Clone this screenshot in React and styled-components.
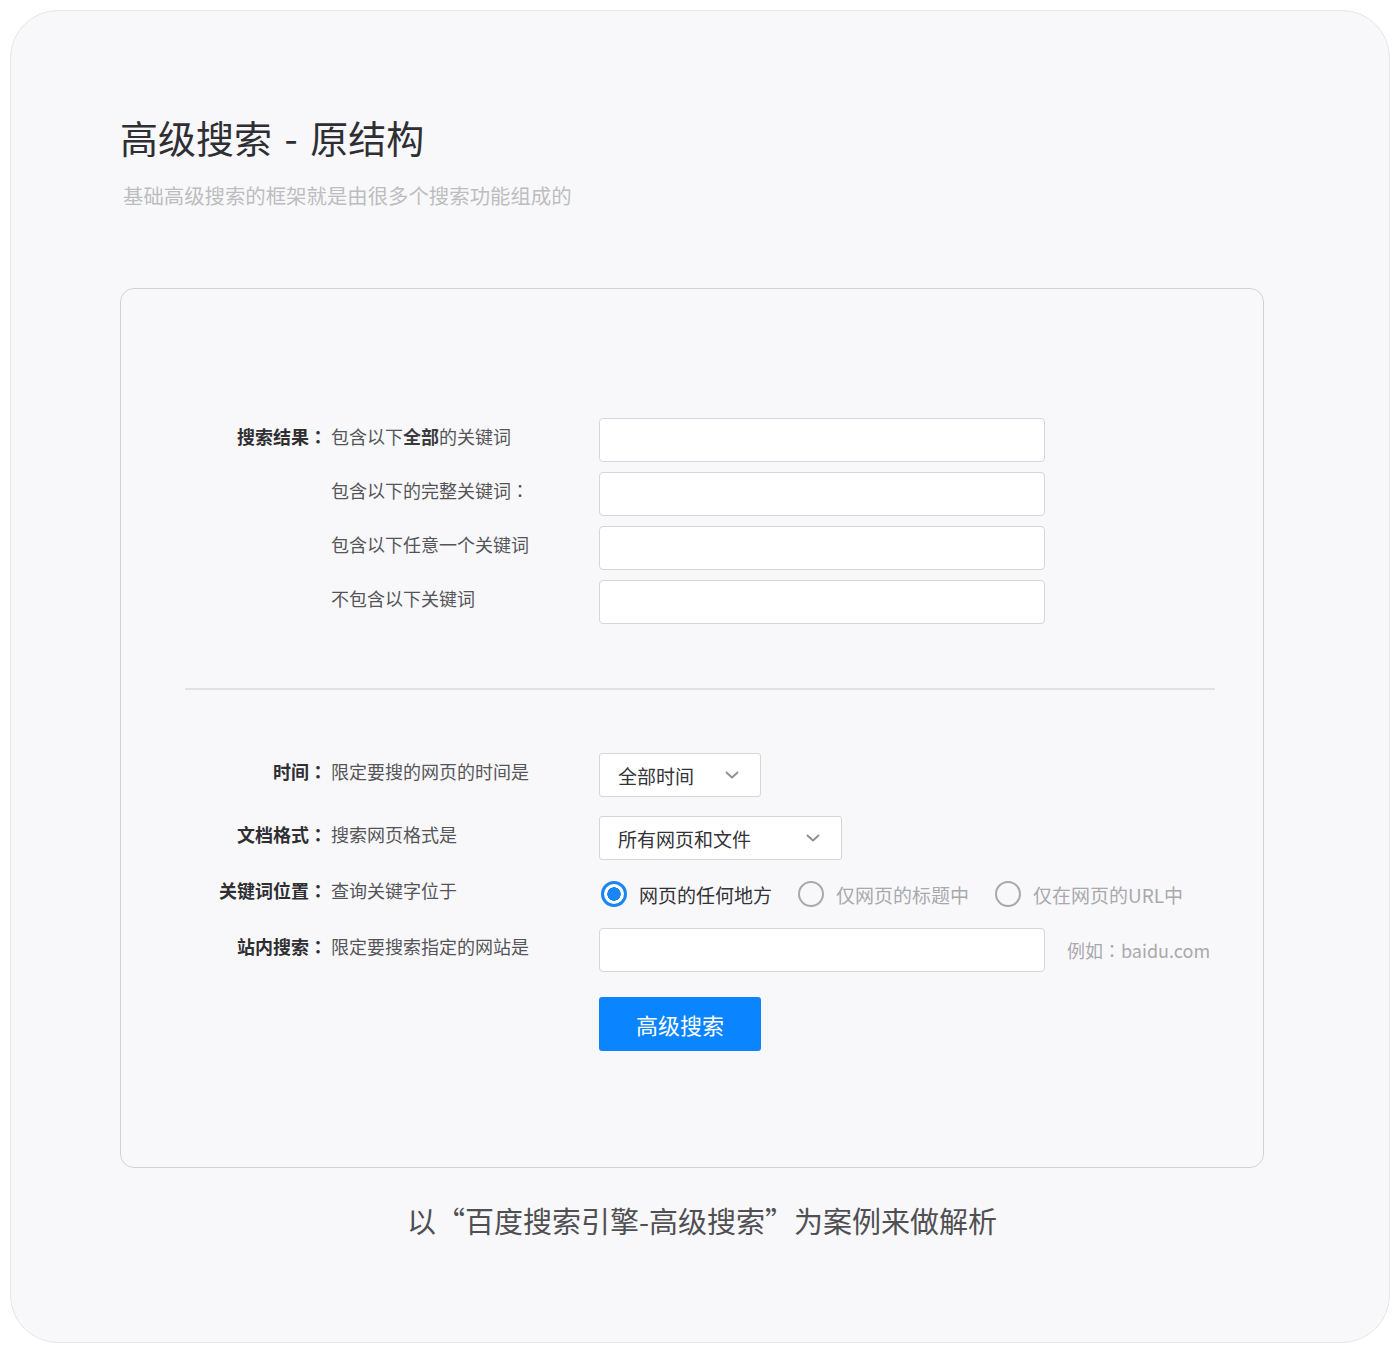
import styled, { createGlobalStyle } from "styled-components";

const GlobalStyle = createGlobalStyle`
    body {
        margin: 0;
        background: #ffffff;
        font-family: "Noto Sans CJK SC", "Noto Sans", sans-serif;
    }
`;

const radios = [
    { text: "网页的任何地方", checked: true },
    { text: "仅网页的标题中" },
    { text: "仅在网页的URL中" },
];

const Chevron = () => (
    <svg width="16" height="16" viewBox="0 0 16 16" fill="none">
        <path d="M2.5 5.5 8 10.5l5.5-5" stroke="#8e8e93" strokeWidth="1.9" strokeLinecap="round" strokeLinejoin="round" />
    </svg>
);

const FieldLabel = ({ children }) => (
    <Label>
        {children && (
            <>
                {children}
                <Colon>：</Colon>
            </>
        )}
    </Label>
);

const App = () => {
    const keywordRows = [
        { label: "搜索结果", text: <>包含以下<b>全部</b>的关键词</> },
        { text: <>包含以下的完整关键词<Colon>：</Colon></> },
        { text: "包含以下任意一个关键词" },
        { text: "不包含以下关键词" },
    ];

    return (
        <>
            <GlobalStyle />
            <Page>
                <Title>高级搜索 - 原结构</Title>
                <Subtitle>基础高级搜索的框架就是由很多个搜索功能组成的</Subtitle>

                <FormBox>
                    <Section>
                        {keywordRows.map((row, i) => (
                            <Row key={i} $gap={i === 0 ? 0 : 10}>
                                <FieldLabel>{row.label}</FieldLabel>
                                <Hint>{row.text}</Hint>
                                <TextInput />
                            </Row>
                        ))}
                    </Section>

                    <Divider />

                    <Section>
                        <Row $gap={0}>
                            <FieldLabel>时间</FieldLabel>
                            <Hint>限定要搜的网页的时间是</Hint>
                            <Select $width={162}>
                                全部时间
                                <Chevron />
                            </Select>
                        </Row>
                        <Row $gap={19}>
                            <FieldLabel>文档格式</FieldLabel>
                            <Hint>搜索网页格式是</Hint>
                            <Select $width={243}>
                                所有网页和文件
                                <Chevron />
                            </Select>
                        </Row>
                        <Row $gap={12}>
                            <FieldLabel>关键词位置</FieldLabel>
                            <Hint>查询关键字位于</Hint>
                            <RadioGroup>
                                {radios.map((r) => (
                                    <RadioItem key={r.text} $checked={r.checked}>
                                        <RadioDot $checked={r.checked} />
                                        {r.text}
                                    </RadioItem>
                                ))}
                            </RadioGroup>
                        </Row>
                        <Row $gap={12}>
                            <FieldLabel>站内搜索</FieldLabel>
                            <Hint>限定要搜索指定的网站是</Hint>
                            <SiteField>
                                <TextInput />
                                <Example>例如<Colon>：</Colon>baidu.com</Example>
                            </SiteField>
                        </Row>
                        <Row $gap={25}>
                            <FieldLabel />
                            <Hint />
                            <SubmitButton>高级搜索</SubmitButton>
                        </Row>
                    </Section>
                </FormBox>

                <Caption>以“百度搜索引擎-高级搜索”为案例来做解析</Caption>
            </Page>
        </>
    );
};

export default App;

const Page = styled.div`
    box-sizing: border-box;
    margin: 10px;
    width: 1380px;
    height: 1333px;
    padding: 102px 125px 0 109px;
    background: #f8f8fa;
    border: 1px solid #e6e6e9;
    border-radius: 48px;
`;

const Title = styled.h1`
    margin: 0;
    font-size: 38px;
    line-height: 48px;
    font-weight: 400;
    word-spacing: 4px;
    color: #2f2f33;
`;

const Subtitle = styled.p`
    margin: 21px 0 0 3px;
    font-size: 20.4px;
    line-height: 26px;
    color: #bdbdc0;
`;

const FormBox = styled.div`
    box-sizing: border-box;
    margin-top: 80px;
    height: 880px;
    padding: 129px 48px 0 0;
    border: 1.5px solid #d2d2d6;
    border-radius: 14px;
`;

const Section = styled.div`
    display: flex;
    flex-direction: column;
`;

const Row = styled.div`
    display: grid;
    grid-template-columns: 210px 268px 1fr;
    align-items: center;
    min-height: 44px;
    margin-top: ${(p) => p.$gap}px;
    font-size: 18px;
`;

/* full-width colon, centred in its em box */
const Colon = styled.span`
    font-family: "Noto Sans CJK JP", "Noto Sans CJK SC", sans-serif;
    font-weight: inherit;
`;

const Label = styled.div`
    padding: 0 4px 8px 0;
    text-align: right;
    font-weight: 700;
    color: #2f2f33;
`;

const Hint = styled.div`
    padding-bottom: 8px;
    color: #555559;

    b {
        font-weight: 700;
        color: #3a3a3e;
    }

    ${Colon} {
        font-weight: 400;
    }
`;

const TextInput = styled.input`
    box-sizing: border-box;
    width: 446px;
    height: 44px;
    margin: 0;
    background: #ffffff;
    border: 1.5px solid #d6d6da;
    border-radius: 4px;
    outline: none;
`;

const Divider = styled.hr`
    margin: 64px 0 63px 64px;
    border: none;
    height: 2px;
    background: #e1e1e4;
`;

const Select = styled.div`
    box-sizing: border-box;
    display: flex;
    align-items: center;
    justify-content: space-between;
    width: ${(p) => p.$width}px;
    height: 44px;
    padding: 0 20px 0 18px;
    background: #ffffff;
    border: 1.5px solid #d6d6da;
    border-radius: 3px;
    color: #333337;
    font-size: 19px;
`;

const RadioGroup = styled.div`
    display: flex;
    align-items: center;
    gap: 26px;
    margin-left: 2px;
    font-size: 19px;
`;

const RadioItem = styled.div`
    display: flex;
    align-items: center;
    gap: 12px;
    white-space: nowrap;
    color: ${(p) => (p.$checked ? "#333337" : "#a9a9ad")};
`;

const RadioDot = styled.span`
    box-sizing: border-box;
    width: 26px;
    height: 26px;
    border-radius: 50%;
    border: ${(p) => (p.$checked ? "3px solid #1a86f5" : "2.5px solid #a9a9ad")};
    background: ${(p) => (p.$checked ? "radial-gradient(circle, #1a86f5 0 6.5px, #ffffff 7px)" : "transparent")};
`;

const SiteField = styled.div`
    display: flex;
    align-items: center;
    gap: 22px;
`;

const Example = styled.span`
    color: #a9a9ad;
    white-space: nowrap;
`;

const SubmitButton = styled.button`
    width: 162px;
    height: 54px;
    border: none;
    border-radius: 3px;
    background: #0a84ff;
    color: #ffffff;
    font-family: inherit;
    font-size: 22px;
`;

const Caption = styled.p`
    margin: 33px 0 0;
    padding-left: 20px;
    text-align: center;
    font-size: 29px;
    line-height: 38px;
    color: #505054;
`;
